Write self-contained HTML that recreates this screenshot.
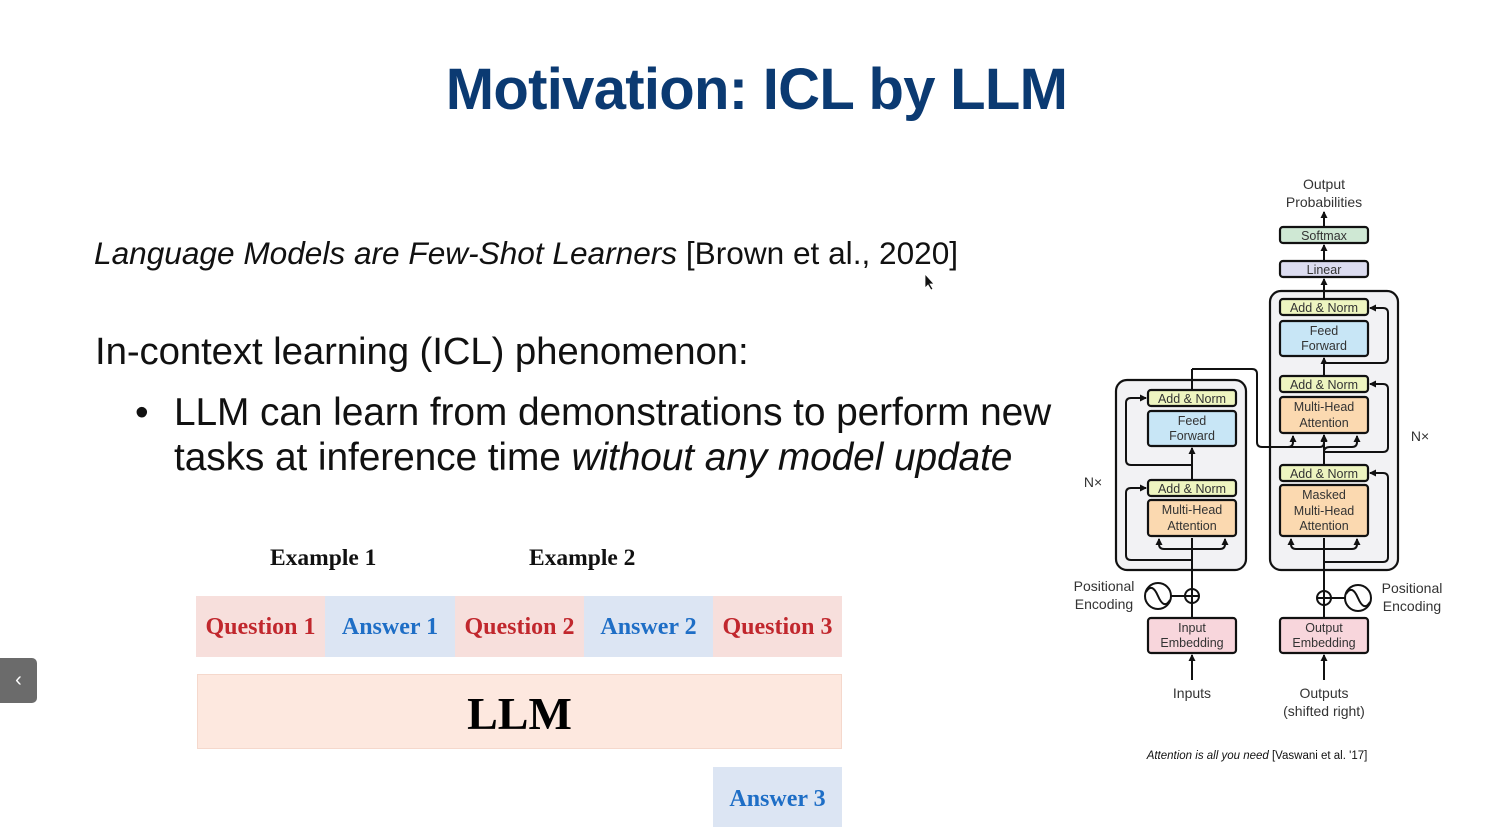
<!DOCTYPE html>
<html><head><meta charset="utf-8"><style>
html,body{margin:0;padding:0;width:1495px;height:827px;overflow:hidden;background:#fff;position:relative;font-family:"Liberation Sans",sans-serif}
.a{position:absolute;white-space:nowrap}
.title{left:0;width:1513px;text-align:center;top:56px;font-size:58px;font-weight:bold;color:#0b3a72;letter-spacing:-0.7px}
.t{font-size:31.6px;color:#111}
.b{font-size:38.9px;color:#111;letter-spacing:-0.1px}
.ser{font-family:"Liberation Serif",serif;font-weight:bold}
.seg{position:absolute;top:596px;height:61px;width:129px;line-height:63px;text-align:center;font-size:24px;font-family:"Liberation Serif",serif;font-weight:bold}
.q{background:#f7dfdc;color:#c1272d}
.an{background:#dce5f3;color:#1e6ec6}
</style></head><body>
<div class="a title">Motivation: ICL by LLM</div>
<div class="a t" style="left:94px;top:235px"><i>Language Models are Few-Shot Learners</i> [Brown et al., 2020]</div>
<div class="a b" style="left:95px;top:330px;font-size:38.4px">In-context learning (ICL) phenomenon:</div>
<div class="a b" style="left:135px;top:391px">•</div>
<div class="a b" style="left:174px;top:391px">LLM can learn from demonstrations to perform new</div>
<div class="a b" style="left:174px;top:436px">tasks at inference time <i>without any model update</i></div>
<div class="a ser" style="left:270px;top:545px;font-size:23.5px;color:#111">Example 1</div>
<div class="a ser" style="left:529px;top:545px;font-size:23.5px;color:#111">Example 2</div>
<div class="seg q" style="left:196px">Question 1</div>
<div class="seg an" style="left:325px;width:130px">Answer 1</div>
<div class="seg q" style="left:455px">Question 2</div>
<div class="seg an" style="left:584px">Answer 2</div>
<div class="seg q" style="left:713px">Question 3</div>
<div class="a ser" style="left:197px;top:674px;width:645px;height:75px;background:#fde8df;border:1px solid #f5d8cc;box-sizing:border-box;text-align:center;line-height:78px;font-size:46px;color:#000">LLM</div>
<div class="seg an" style="left:713px;top:767px;height:60px;line-height:64px">Answer 3</div>
<div class="a" style="left:0;top:658px;width:37px;height:45px;background:#6b6b6b;border-radius:0 5px 5px 0;color:#fff;text-align:center;line-height:44px;font-size:20px">‹</div>
<svg class="a" style="left:0;top:0" width="1495" height="827" viewBox="0 0 1495 827" font-family="Liberation Sans, sans-serif" font-size="12.5" text-anchor="middle">
<defs><marker id="ar" markerUnits="userSpaceOnUse" markerWidth="7" markerHeight="7" refX="6" refY="3.5" orient="auto"><path d="M0,0 L7,3.5 L0,7 z" fill="#111"/></marker></defs>
<g fill="#333">
<text x="1324" y="189" font-size="14">Output</text>
<text x="1324" y="207" font-size="14">Probabilities</text>
<text x="1192" y="698" font-size="14">Inputs</text>
<text x="1324" y="698" font-size="14">Outputs</text>
<text x="1324" y="716" font-size="14">(shifted right)</text>
<text x="1104" y="591" font-size="14">Positional</text>
<text x="1104" y="609" font-size="14">Encoding</text>
<text x="1412" y="593" font-size="14">Positional</text>
<text x="1412" y="611" font-size="14">Encoding</text>
<text x="1093" y="487" font-size="14">N×</text>
<text x="1420" y="441" font-size="14">N×</text>
<text x="1257" y="759" font-size="11.5" fill="#111"><tspan font-style="italic">Attention is all you need</tspan> [Vaswani et al. '17]</text>
</g>
<g stroke="#111" stroke-width="2.2">
<rect x="1116" y="380" width="130" height="190" rx="11" fill="#f2f2f4"/>
<rect x="1270" y="291" width="128" height="279" rx="11" fill="#f2f2f4"/>
</g>
<g stroke="#111" stroke-width="2" fill="none">
<line x1="1324" y1="227" x2="1324" y2="212" marker-end="url(#ar)"/>
<line x1="1324" y1="261" x2="1324" y2="245" marker-end="url(#ar)"/>
<line x1="1324" y1="299" x2="1324" y2="279" marker-end="url(#ar)"/>
<line x1="1324" y1="376" x2="1324" y2="358" marker-end="url(#ar)"/>
<line x1="1324" y1="465" x2="1324" y2="435" marker-end="url(#ar)"/>
<line x1="1324" y1="618" x2="1324" y2="538" />
<line x1="1324" y1="680" x2="1324" y2="655" marker-end="url(#ar)"/>
<line x1="1192" y1="680" x2="1192" y2="655" marker-end="url(#ar)"/>
<line x1="1192" y1="618" x2="1192" y2="538"/>
<line x1="1192" y1="480" x2="1192" y2="448" marker-end="url(#ar)"/>
<line x1="1192" y1="390" x2="1192" y2="369"/>
<path d="M1192,369 H1252 Q1257,369 1257,374 V442 Q1257,447 1262,447 H1288 Q1293,447 1293,442 V436" marker-end="url(#ar)"/>
<path d="M1288,447 H1320 Q1324,447 1324,442 V436" marker-end="url(#ar)"/>
<path d="M1324,452 Q1324,447 1330,447 H1352 Q1357,447 1357,442 V436" marker-end="url(#ar)"/>
<path d="M1324,363 H1383 Q1388,363 1388,358 V313 Q1388,308 1383,308 H1370" marker-end="url(#ar)"/>
<path d="M1324,452 H1383 Q1388,452 1388,447 V389 Q1388,384 1383,384 H1370" marker-end="url(#ar)"/>
<path d="M1324,562 H1383 Q1388,562 1388,557 V478 Q1388,473 1383,473 H1370" marker-end="url(#ar)"/>
<path d="M1324,549 H1296 Q1291,549 1291,544 V539" marker-end="url(#ar)"/>
<path d="M1324,549 H1352 Q1357,549 1357,544 V539" marker-end="url(#ar)"/>
<path d="M1192,549 H1164 Q1159,549 1159,544 V539" marker-end="url(#ar)"/>
<path d="M1192,549 H1220 Q1225,549 1225,544 V539" marker-end="url(#ar)"/>
<path d="M1192,560 H1131 Q1126,560 1126,555 V493 Q1126,488 1131,488 H1146" marker-end="url(#ar)"/>
<path d="M1192,465 H1131 Q1126,465 1126,460 V403 Q1126,398 1131,398 H1146" marker-end="url(#ar)"/>
<line x1="1171" y1="596" x2="1185" y2="596"/>
<line x1="1331" y1="598" x2="1345" y2="598"/>
<circle cx="1158" cy="596" r="13"/><path d="M1146,592 Q1152,582 1158,596 Q1164,610 1170,600"/>
<circle cx="1358" cy="598" r="13"/><path d="M1346,594 Q1352,584 1358,598 Q1364,612 1370,602"/>
<circle cx="1192" cy="596" r="7" fill="#fff"/><path d="M1185,596 H1199 M1192,589 V603"/>
<circle cx="1324" cy="598" r="7" fill="#fff"/><path d="M1317,598 H1331 M1324,591 V605"/>
</g>
<g stroke="#111" stroke-width="2.2">
<rect x="1280" y="227" width="88" height="16" rx="3" fill="#cfe8d4"/>
<rect x="1280" y="261" width="88" height="16" rx="3" fill="#dcdcf0"/>
<rect x="1280" y="299" width="88" height="16" rx="3" fill="#eef5c0"/>
<rect x="1280" y="321" width="88" height="35" rx="3" fill="#c8e6f6"/>
<rect x="1280" y="376" width="88" height="16" rx="3" fill="#eef5c0"/>
<rect x="1280" y="397" width="88" height="36" rx="3" fill="#fbd9b0"/>
<rect x="1280" y="465" width="88" height="16" rx="3" fill="#eef5c0"/>
<rect x="1280" y="485" width="88" height="51" rx="3" fill="#fbd9b0"/>
<rect x="1148" y="390" width="88" height="16" rx="3" fill="#eef5c0"/>
<rect x="1148" y="411" width="88" height="35" rx="3" fill="#c8e6f6"/>
<rect x="1148" y="480" width="88" height="16" rx="3" fill="#eef5c0"/>
<rect x="1148" y="500" width="88" height="36" rx="3" fill="#fbd9b0"/>
<rect x="1148" y="618" width="88" height="35" rx="3" fill="#f8d6dc"/>
<rect x="1280" y="618" width="88" height="35" rx="3" fill="#f8d6dc"/>
</g>
<g fill="#333">
<text x="1324" y="240">Softmax</text>
<text x="1324" y="274">Linear</text>
<text x="1324" y="312">Add &amp; Norm</text>
<text x="1324" y="335">Feed</text><text x="1324" y="350">Forward</text>
<text x="1324" y="389">Add &amp; Norm</text>
<text x="1324" y="411">Multi-Head</text><text x="1324" y="427">Attention</text>
<text x="1324" y="478">Add &amp; Norm</text>
<text x="1324" y="499">Masked</text><text x="1324" y="515">Multi-Head</text><text x="1324" y="530">Attention</text>
<text x="1192" y="403">Add &amp; Norm</text>
<text x="1192" y="425">Feed</text><text x="1192" y="440">Forward</text>
<text x="1192" y="493">Add &amp; Norm</text>
<text x="1192" y="514">Multi-Head</text><text x="1192" y="530">Attention</text>
<text x="1192" y="632">Input</text><text x="1192" y="647">Embedding</text>
<text x="1324" y="632">Output</text><text x="1324" y="647">Embedding</text>
</g>
<path d="M925,274 L925,288 L928,285 L931,290 L933,289 L930,284 L934,284 Z" fill="#111" stroke="#fff" stroke-width="0.8"/>
</svg>
</body></html>
